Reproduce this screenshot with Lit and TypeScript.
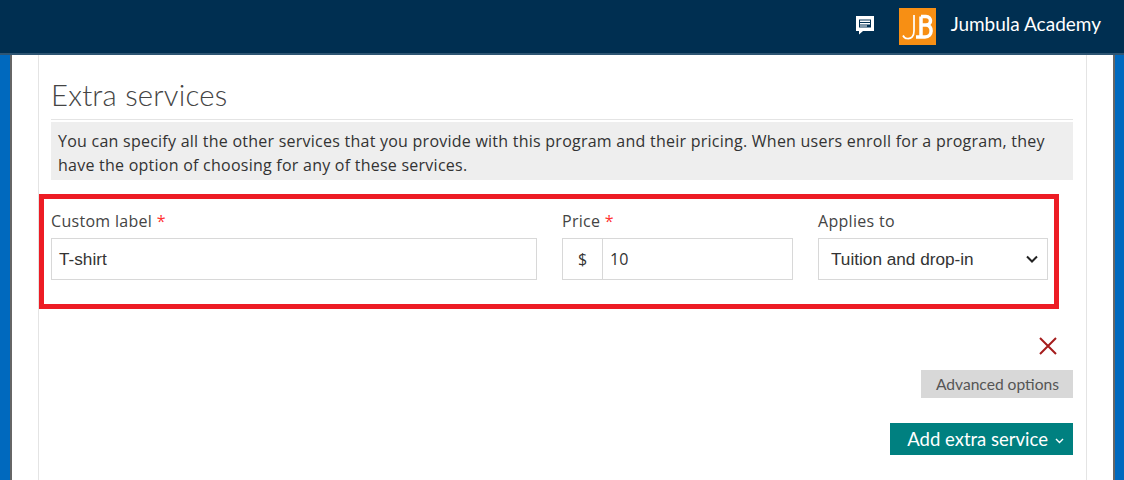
import { LitElement, html, css } from "lit";
import { customElement } from "lit/decorators.js";

@customElement("app-root")
export class AppRoot extends LitElement {
  static styles = css`
    :host { display: block; height: 480px; overflow: hidden; background: #fff; font-family: "Open Sans", "Liberation Sans", sans-serif; color: #333; }
    .top { height: 53px; background: #002f51; border-bottom: 2px solid #2d5573; display: flex; align-items: center; justify-content: flex-end; padding-right: 23px; box-sizing: content-box; }
    .chat { width: 20px; height: 20px; margin-right: 24px; display: block; position: relative; top: -2px; }
    .logo { width: 37px; height: 37px; background: #f78f14; margin-right: 15px; display: block; }
    .org { font-family: Lato, sans-serif; font-size: 19px; color: #fff; position: relative; top: -3px; }
    .frame { height: 425px; display: flex; border-left: 10px solid #0069be; border-right: 9px solid #0069be; box-sizing: border-box; }
    .inner { flex: 1; border-left: 2px solid #666; border-right: 2px solid #666; padding: 0 26px; display: flex; }
    .panel { flex: 1; border-left: 1px solid #e4e4e4; border-right: 1px solid #e4e4e4; padding: 0 13px 0 12px; }
    h2 { font-family: Lato, sans-serif; font-weight: 300; font-size: 29.3px; line-height: 34px; margin: 23px 0 0; padding-bottom: 7px; border-bottom: 1px solid #e4e4e4; color: #444; letter-spacing: .2px; }
    .note { background: #eee; margin-top: 2px; height: 58px; padding: 7px 7px; box-sizing: border-box; font-size: 16px; letter-spacing: .245px; line-height: 24px; color: #333; }
    .red { margin: 14px 14px 0 -12px; height: 115px; border: 5px solid #ed1c24; box-sizing: border-box; padding: 10px 6px 0 7px; display: grid; grid-template-columns: 486px 231px 230px; column-gap: 25px; }
    label { display: block; font-size: 16px; letter-spacing: .3px; line-height: 24px; color: #444; margin-bottom: 5px; }
    label span { color: #f33; }
    .box { height: 42px; border: 1px solid #d8d8d8; box-sizing: border-box; display: flex; align-items: center; font-family: "Liberation Sans", sans-serif; font-size: 17.2px; color: #333; }
    .text { padding-left: 7px; }
    .prefix { width: 39px; height: 100%; border-right: 1px solid #d8d8d8; display: flex; align-items: center; justify-content: center; font-family: "Open Sans", sans-serif; font-size: 16px; }
    .num { padding-left: 7px; font-family: "Open Sans", sans-serif; font-size: 16px; }
    .sel { padding: 0 9px 0 12px; justify-content: space-between; }
    .actions { display: flex; flex-direction: column; align-items: flex-end; }
    .x { display: block; width: 20px; height: 20px; margin: 27px 15px 0 0; }
    .adv { margin-top: 14px; width: 152px; height: 28px; background: #d8d8d8; display: flex; align-items: center; justify-content: flex-end; padding-right: 14px; box-sizing: border-box; font-family: Lato, sans-serif; font-size: 15.6px; color: #555; }
    .add { margin-top: 25px; width: 183px; height: 32px; background: #008080; display: flex; align-items: center; justify-content: flex-end; gap: 7px; padding-right: 9px; box-sizing: border-box; font-family: Lato, sans-serif; font-size: 18.5px; color: #fff; }
    .add svg { position: relative; top: 2px; }
  `;

  render() {
    return html`
      <div class="top">
        <svg class="chat" viewBox="0 0 20 20"><path fill="#fff" d="M1 1h18v15H8l-4 3.500V16H1z"/><path fill="#002f51" d="M4 4.500h12v8H4z"/><path fill="#fff" d="M5 5.500h10v1.500H5zM5 8h10v1.500H5zM5 10.500h7v1H5z"/></svg>
        <svg class="logo" viewBox="0 0 37 37" fill="none" stroke="#fff">
          <path stroke-width="1.700" d="M15 7v16c0 6-3 8-7 7.500-2 0-3-1-4-3"/>
          <path stroke-width="3.500" d="M22 8.500h5c6 0 6 8.500 0 8.500h-5m5 0c7 0 7 12-1 12h-9M22 8.500V29"/>
        </svg>
        <div class="org">Jumbula Academy</div>
      </div>
      <div class="frame"><div class="inner"><div class="panel">
        <h2>Extra services</h2>
        <div class="note">You can specify all the other services that you provide with this program and their pricing. When users enroll for a program, they have the option of choosing for any of these services.</div>
        <div class="red">
          <div><label>Custom label <span>*</span></label><div class="box text">T-shirt</div></div>
          <div><label>Price <span>*</span></label><div class="box"><div class="prefix">$</div><div class="num">10</div></div></div>
          <div><label>Applies to</label><div class="box sel">Tuition and drop-in
            <svg width="12" height="8" viewBox="0 0 12 8" fill="none" stroke="#222" stroke-width="2"><path d="M1 1.500l5 5 5-5"/></svg></div></div>
        </div>
        <div class="actions">
          <svg class="x" viewBox="0 0 20 20" stroke="#a51c1c" stroke-width="2" fill="none"><path d="M2 2l16 16M18 2L2 18"/></svg>
          <div class="adv">Advanced options</div>
          <div class="add">Add extra service
            <svg width="9" height="6" viewBox="0 0 9 6" fill="none" stroke="#fff" stroke-width="1.400"><path d="M1 1l3.500 3.500L8 1"/></svg></div>
        </div>
      </div></div></div>
    `;
  }
}
